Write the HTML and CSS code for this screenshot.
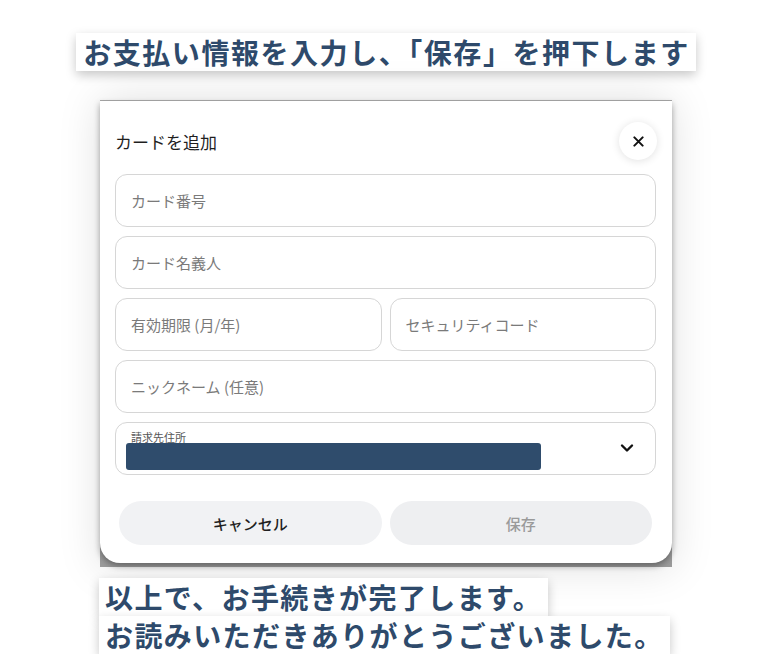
FILE: index.html
```html
<!DOCTYPE html>
<html lang="ja">
<head>
  <meta charset="utf-8">
  <link rel="stylesheet" href="styles.css">
</head>
<body>
  <div class="page">
    <div class="caption caption-top">お支払い情報を入力し、「保存」を押下します</div>

    <div class="shot">
      <div class="dialog">
        <div class="dialog-header">
          <h2>カードを追加</h2>
          <button class="close-btn">
            <svg width="11" height="11" viewBox="0 0 12 12"><path d="M1.5 1.5 L10.5 10.5 M10.5 1.5 L1.5 10.5" stroke="#111" stroke-width="2.2" stroke-linecap="round"/></svg>
          </button>
        </div>

        <div class="form">
          <div class="field">カード番号</div>
          <div class="field">カード名義人</div>
          <div class="field-row">
            <div class="field">有効期限 (月/年)</div>
            <div class="field">セキュリティコード</div>
          </div>
          <div class="field">ニックネーム (任意)</div>
          <div class="field select">
            <div class="select-body">
              <span class="select-label">請求先住所</span>
              <span class="redact"></span>
            </div>
            <svg class="chevron" width="14" height="10" viewBox="0 0 14 10"><path d="M2 2.5 L7 7.5 L12 2.5" fill="none" stroke="#111" stroke-width="2.4" stroke-linecap="round" stroke-linejoin="round"/></svg>
          </div>
        </div>

        <div class="actions">
          <button class="btn btn-cancel">キャンセル</button>
          <button class="btn btn-save">保存</button>
        </div>
      </div>
    </div>

    <div class="caption-bottom">
      <div class="caption">以上で、お手続きが完了します。</div>
      <div class="caption">お読みいただきありがとうございました。</div>
    </div>
  </div>
</body>
</html>
```

FILE: styles.css
```css
body {
  margin: 0;
  background: #fff;
  font-family: "Noto Sans CJK JP", "Noto Sans", sans-serif;
}

.page {
  width: 572px;
  margin: 0 auto;
  padding-top: 33px;
  display: flex;
  flex-direction: column;
}

.caption {
  background: #fff;
  color: #2e4a6b;
  font-weight: 700;
  font-size: 28px;
  line-height: 38px;
  letter-spacing: 0.8px;
  padding: 0 6px;
  box-shadow: 0 4px 10px rgba(0,0,0,0.22);
  white-space: nowrap;
}

.caption-top {
  align-self: center;
  padding: 0 6px 0 7px;
  letter-spacing: 1.55px;
  margin-bottom: 29px;
}

.caption-bottom {
  margin-top: 11px;
  display: flex;
  flex-direction: column;
  align-items: flex-start;
  margin-left: -1px;
}

.caption-bottom .caption {
  letter-spacing: 1.4px;
}

/* screenshot of the dialog */
.shot {
  border-top: 1px solid #a8a8a8;
  background: linear-gradient(#c8c8c8, #9a9a9a);
  box-shadow: 0 0 40px rgba(0,0,0,0.13);
  padding-bottom: 4px;
}

.dialog {
  background: #fff;
  border-radius: 0 0 20px 20px;
  box-shadow: 0 3px 6px rgba(0,0,0,0.35);
  padding: 21px 16px 18px 15px;
}

.dialog-header {
  display: flex;
  align-items: center;
  justify-content: space-between;
  height: 38px;
  margin-bottom: 14px;
}

.dialog-header h2 {
  margin: 0;
  font-size: 17px;
  font-weight: 400;
  color: #1f1f1f;
}

.close-btn {
  width: 38px;
  height: 38px;
  margin-right: -1px;
  border: none;
  border-radius: 50%;
  background: #fff;
  box-shadow: 0 1px 8px rgba(0,0,0,0.12);
  display: flex;
  align-items: center;
  justify-content: center;
  padding: 0;
}

.form {
  display: flex;
  flex-direction: column;
  gap: 9px;
}

.field-row {
  display: grid;
  grid-template-columns: 1fr 1fr;
  gap: 8px;
}

.field {
  height: 53px;
  box-sizing: border-box;
  border: 1px solid #d6d6d6;
  border-radius: 12px;
  padding: 0 15px;
  display: flex;
  align-items: center;
  font-size: 15px;
  color: #7a7a7a;
}

.select {
  justify-content: space-between;
  padding: 0 21px 0 10px;
}

.select-body {
  display: flex;
  flex-direction: column;
  align-self: stretch;
  padding-top: 8px;
}

.select-label {
  font-size: 11px;
  line-height: 13px;
  color: #555;
  margin-left: 5px;
}

.redact {
  width: 415px;
  height: 27px;
  margin-top: -1px;
  background: #2f4c6c;
  border-radius: 3px;
}

.chevron {
  margin-top: -2px;
}

.actions {
  display: grid;
  grid-template-columns: 1fr 1fr;
  gap: 8px;
  padding: 0 4px;
  margin-top: 26px;
}

.btn {
  height: 44px;
  border: none;
  border-radius: 22px;
  font-family: inherit;
  font-size: 15px;
  font-weight: 500;
}

.btn-cancel {
  background: #f1f2f4;
  color: #1f1f1f;
}

.btn-save {
  background: #eeeff1;
  color: #9a9a9a;
}
```
